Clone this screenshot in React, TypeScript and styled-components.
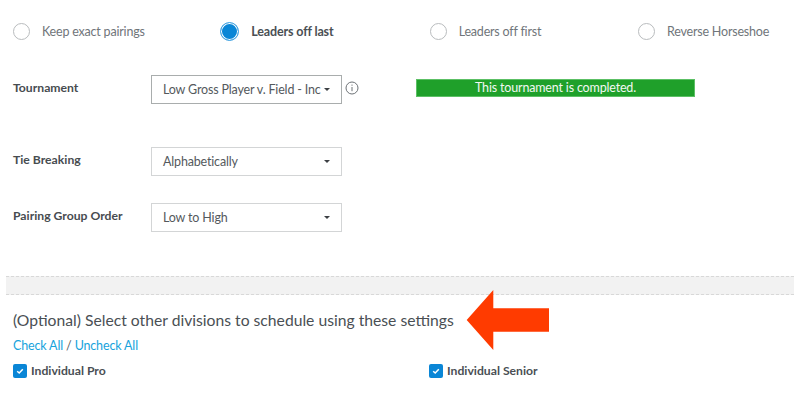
import React from "react";
import styled, { createGlobalStyle } from "styled-components";

const Global = createGlobalStyle`
  html, body { margin: 0; padding: 0; background: #fff; }
  body { font-family: Lato, "Liberation Sans", sans-serif; color: #4a4f54; }
`;

const Page = styled.div`
  position: relative;
  width: 800px;
  height: 402px;
  overflow: hidden;
  padding-top: 21px;
  box-sizing: border-box;
`;

const RadioRow = styled.div`
  display: grid;
  grid-template-columns: repeat(4, 208.33px);
  margin-left: 13px;
  height: 20px;
`;

const RadioItem = styled.label<{ $active?: boolean }>`
  display: flex;
  align-items: center;
  gap: 12px;
  font-size: 12.5px;
  letter-spacing: ${(p) => (p.$active ? "-0.15px" : "-0.2px")};
  font-weight: ${(p) => (p.$active ? 700 : 400)};
  color: ${(p) => (p.$active ? "#4a4f54" : "#70757a")};
`;

const RadioDot = styled.span<{ $active?: boolean }>`
  box-sizing: border-box;
  width: ${(p) => (p.$active ? 19 : 17)}px;
  height: ${(p) => (p.$active ? 19 : 17)}px;
  margin-left: ${(p) => (p.$active ? -1 : 0)}px;
  border-radius: 50%;
  flex: none;
  border: ${(p) => (p.$active ? "1px solid #4ba8e4" : "1.5px solid #b9bcbe")};
  background: ${(p) => (p.$active ? "#0a86d6" : "#fff")};
  box-shadow: ${(p) => (p.$active ? "inset 0 0 0 1px #fff" : "none")};
`;

const FormRow = styled.div<{ $top: number }>`
  display: flex;
  align-items: flex-start;
  margin-top: ${(p) => p.$top}px;
  margin-left: 13px;
`;

const FieldLabel = styled.div`
  width: 138px;
  font-size: 12.2px;
  font-weight: 700;
  line-height: 16px;
  padding-top: 5px;
  color: #474c50;
`;

const Select = styled.div<{ $strong?: boolean }>`
  box-sizing: border-box;
  width: 191px;
  height: 29px;
  padding: 0 11px 0 11px;
  display: flex;
  align-items: center;
  justify-content: space-between;
  border: 1px solid ${(p) => (p.$strong ? "#a9adad" : "#d3d5d6")};
  font-size: 12.5px;
  letter-spacing: -0.17px;
  color: #54595d;
  white-space: nowrap;
`;

const Caret = styled.span`
  width: 0;
  height: 0;
  flex: none;
  border-left: 3.5px solid transparent;
  border-right: 3.5px solid transparent;
  border-top: 3.5px solid #3c4044;
`;

const InfoIcon = styled.svg`
  width: 14px;
  height: 14px;
  margin: 6px 0 0 3px;
  flex: none;
`;

const Banner = styled.div`
  box-sizing: border-box;
  width: 279px;
  height: 18px;
  margin: 4px 0 0 57px;
  background: #1fa02a;
  border: 1px solid #5cc065;
  color: #f2f8f2;
  font-size: 12.5px;
  letter-spacing: -0.17px;
  line-height: 15px;
  text-align: center;
`;

const Divider = styled.div`
  box-sizing: border-box;
  height: 19px;
  margin: 44px 6px 0;
  background: #f2f2f2;
  border-top: 1px dashed #d8d8d8;
  border-bottom: 1px dashed #d8d8d8;
`;

const Heading = styled.h2`
  margin: 15px 0 0 13px;
  font-size: 15.7px;
  line-height: 20px;
  font-weight: 400;
  color: #4a4f54;
`;

const LinkRow = styled.div`
  margin: 8px 0 0 13px;
  font-size: 12.5px;
  line-height: 16px;
  letter-spacing: -0.15px;
  color: #5a5f63;
`;

const TextLink = styled.a`
  color: #17a3dc;
`;

const CheckGrid = styled.div`
  display: grid;
  grid-template-columns: 416px 300px;
  margin: 9px 0 0 13px;
`;

const CheckItem = styled.label`
  display: flex;
  align-items: center;
  gap: 4px;
  font-size: 12.2px;
  font-weight: 700;
  color: #4a4f54;
`;

const CheckBox = styled.span`
  box-sizing: border-box;
  width: 14px;
  height: 14px;
  border-radius: 2px;
  background: #0a86d6;
  display: flex;
  align-items: center;
  justify-content: center;
`;

const Arrow = styled.svg`
  position: absolute;
  left: 466px;
  top: 289px;
  width: 84px;
  height: 62px;
`;

const Check = () => (
  <CheckBox>
    <svg width="10" height="10" viewBox="0 0 10 10" fill="none">
      <path d="M2.2 5.2 4.2 7 7.8 3.2" stroke="#fff" strokeWidth="1.5" />
    </svg>
  </CheckBox>
);

export default function App() {
  return (
    <Page>
      <Global />
      <RadioRow>
        <RadioItem><RadioDot />Keep exact pairings</RadioItem>
        <RadioItem $active><RadioDot $active />Leaders off last</RadioItem>
        <RadioItem><RadioDot />Leaders off first</RadioItem>
        <RadioItem><RadioDot />Reverse Horseshoe</RadioItem>
      </RadioRow>
      <FormRow $top={34}>
        <FieldLabel>Tournament</FieldLabel>
        <Select $strong>
          Low Gross Player v. Field - Inc
          <Caret />
        </Select>
        <InfoIcon viewBox="0 0 14 14" fill="none">
          <circle cx="7" cy="7" r="6" stroke="#6d7276" strokeWidth="1" />
          <path d="M7 6v4.2" stroke="#6d7276" strokeWidth="1" />
          <circle cx="7" cy="4.1" r="0.7" fill="#6d7276" />
        </InfoIcon>
        <Banner>This tournament is completed.</Banner>
      </FormRow>
      <FormRow $top={43}>
        <FieldLabel>Tie Breaking</FieldLabel>
        <Select>
          Alphabetically
          <Caret />
        </Select>
      </FormRow>
      <FormRow $top={27}>
        <FieldLabel>Pairing Group Order</FieldLabel>
        <Select>
          Low to High
          <Caret />
        </Select>
      </FormRow>
      <Divider />
      <Heading>(Optional) Select other divisions to schedule using these settings</Heading>
      <LinkRow>
        <TextLink>Check All</TextLink> / <TextLink>Uncheck All</TextLink>
      </LinkRow>
      <CheckGrid>
        <CheckItem><Check />Individual Pro</CheckItem>
        <CheckItem><Check />Individual Senior</CheckItem>
      </CheckGrid>
      <Arrow viewBox="0 0 84 62">
        <path d="M0.7 31 27.3 1V19.3H83V42.7H27.3V61Z" fill="#ff3b00" />
      </Arrow>
    </Page>
  );
}
